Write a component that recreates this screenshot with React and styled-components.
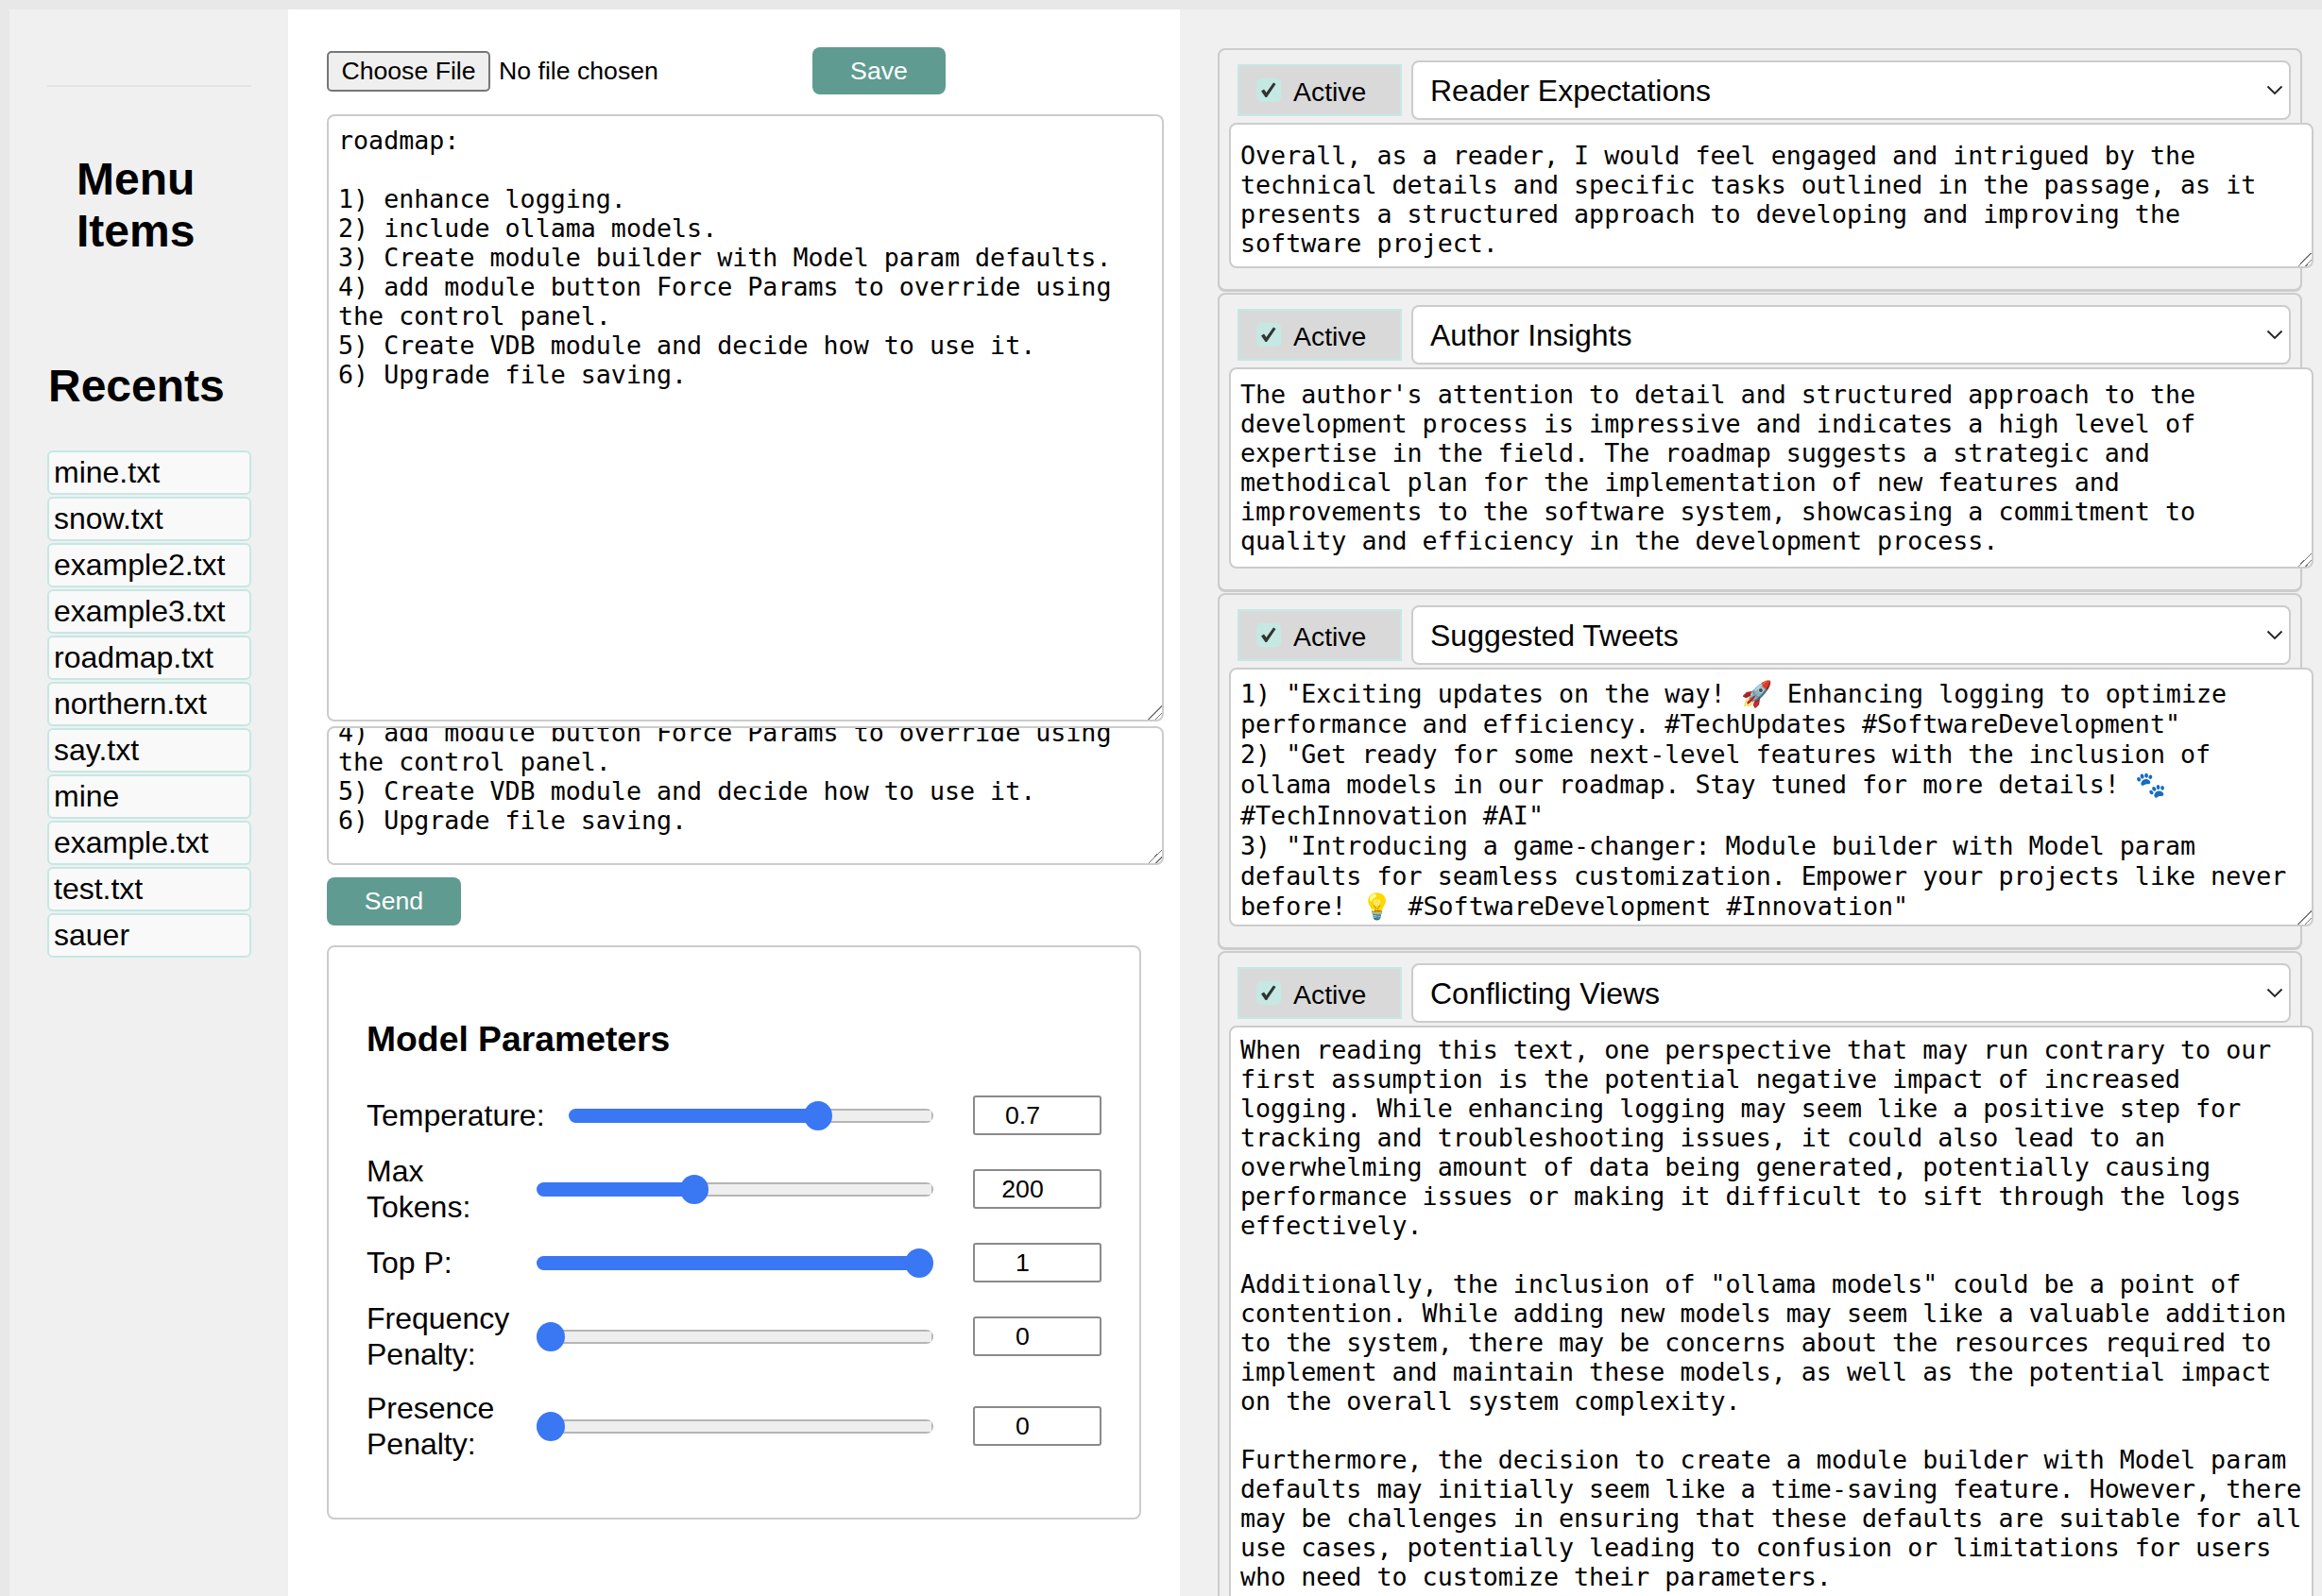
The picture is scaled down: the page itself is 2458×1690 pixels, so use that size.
import React, { useLayoutEffect, useRef } from 'react'
import styled, { createGlobalStyle } from 'styled-components'

const recents = ['mine.txt', 'snow.txt', 'example2.txt', 'example3.txt', 'roadmap.txt', 'northern.txt', 'say.txt', 'mine', 'example.txt', 'test.txt', 'sauer']

const roadmap = `roadmap:

1) enhance logging.
2) include ollama models.
3) Create module builder with Model param defaults.
4) add module button Force Params to override using the control panel.
5) Create VDB module and decide how to use it.
6) Upgrade file saving.
`

const params = [
  { label: 'Temperature:', value: 0.7, max: 1, step: 0.01 },
  { label: 'Max Tokens:', value: 200, max: 512, step: 1 },
  { label: 'Top P:', value: 1, max: 1, step: 0.01 },
  { label: 'Frequency Penalty:', value: 0, max: 2, step: 0.01 },
  { label: 'Presence Penalty:', value: 0, max: 2, step: 0.01 },
]

const panels = [
  {
    title: 'Reader Expectations',
    height: 154,
    top: 16.5,
    text: 'Overall, as a reader, I would feel engaged and intrigued by the technical details and specific tasks outlined in the passage, as it presents a structured approach to developing and improving the software project.',
  },
  {
    title: 'Author Insights',
    height: 213,
    top: 10.5,
    text: "The author's attention to detail and structured approach to the development process is impressive and indicates a high level of expertise in the field. The roadmap suggests a strategic and methodical plan for the implementation of new features and improvements to the software system, showcasing a commitment to quality and efficiency in the development process.",
  },
  {
    title: 'Suggested Tweets',
    height: 274,
    top: 10,
    lineHeight: 32.14,
    text: `1) "Exciting updates on the way! 🚀 Enhancing logging to optimize performance and efficiency. #TechUpdates #SoftwareDevelopment"
2) "Get ready for some next-level features with the inclusion of ollama models in our roadmap. Stay tuned for more details! 🐾 #TechInnovation #AI"
3) "Introducing a game-changer: Module builder with Model param defaults for seamless customization. Empower your projects like never before! 💡 #SoftwareDevelopment #Innovation"`,
  },
  {
    title: 'Conflicting Views',
    height: 640,
    top: 8,
    text: `When reading this text, one perspective that may run contrary to our first assumption is the potential negative impact of increased logging. While enhancing logging may seem like a positive step for tracking and troubleshooting issues, it could also lead to an overwhelming amount of data being generated, potentially causing performance issues or making it difficult to sift through the logs effectively.

Additionally, the inclusion of "ollama models" could be a point of contention. While adding new models may seem like a valuable addition to the system, there may be concerns about the resources required to implement and maintain these models, as well as the potential impact on the overall system complexity.

Furthermore, the decision to create a module builder with Model param defaults may initially seem like a time-saving feature. However, there may be challenges in ensuring that these defaults are suitable for all use cases, potentially leading to confusion or limitations for users who need to customize their parameters.`,
  },
]

const ParamRow = ({ param }) => (
  <Row>
    <RowLabel>{param.label}</RowLabel>
    <Slider
      type="range"
      min="0"
      max={param.max}
      step={param.step}
      defaultValue={param.value}
      $ratio={param.value / param.max}
    />
    <NumberInput type="number" defaultValue={param.value} />
  </Row>
)

const Panel = ({ panel }) => (
  <Card>
    <CardHead>
      <ActiveBox>
        <CheckWrap>
          <CheckInput type="checkbox" defaultChecked />
          <CheckMark viewBox="0 0 26 25">
            <path d="M5 13.5 L8 11.5 L10.5 15 L18 4.5 L20.5 6 L11 20 L9.5 20 Z" fill="#333" />
          </CheckMark>
        </CheckWrap>
        <ActiveText>Active</ActiveText>
      </ActiveBox>
      <SelectWrap>
        <Select defaultValue={panel.title}>
          <option>{panel.title}</option>
        </Select>
        <Chevron viewBox="0 0 18 11">
          <path d="M1.5 1.5 L9 9 L16.5 1.5" fill="none" stroke="#222" strokeWidth="1.8" />
        </Chevron>
      </SelectWrap>
    </CardHead>
    <CardText
      readOnly
      value={panel.text}
      $height={panel.height}
      $top={panel.top}
      $lineHeight={panel.lineHeight || 31}
    />
  </Card>
)

export default function App() {
  const promptRef = useRef(null)

  useLayoutEffect(() => {
    promptRef.current.scrollTop = 176
  }, [])

  return (
    <>
      <GlobalStyle />
      <Page>
        <Sidebar>
          <Rule />
          <MenuTitle>Menu Items</MenuTitle>
          <RecentsTitle>Recents</RecentsTitle>
          <RecentList>
            {recents.map((name, i) => (
              <RecentItem key={i}>{name}</RecentItem>
            ))}
          </RecentList>
        </Sidebar>

        <Center>
          <FileRow>
            <FileInput type="file" />
            <ActionButton type="button">Save</ActionButton>
          </FileRow>
          <MainText readOnly value={roadmap} />
          <PromptText ref={promptRef} readOnly value={roadmap} />
          <SendButton type="button">Send</SendButton>
          <ParamsCard>
            <ParamsTitle>Model Parameters</ParamsTitle>
            <Rows>
              {params.map((param) => (
                <ParamRow key={param.label} param={param} />
              ))}
            </Rows>
          </ParamsCard>
        </Center>

        <RightColumn>
          {panels.map((panel) => (
            <Panel key={panel.title} panel={panel} />
          ))}
        </RightColumn>
      </Page>
    </>
  )
}

const GlobalStyle = createGlobalStyle`
  html, body {
    margin: 0;
    height: 1690px;
    overflow: hidden;
    background: #e8e8e8;
    font-family: "Liberation Sans", Arial, sans-serif;
    color: #000;
  }
  * {
    box-sizing: border-box;
  }
`

const Page = styled.div`
  display: flex;
  height: 1690px;
  padding: 10px 0 0 10px;
  overflow: hidden;
`

const Sidebar = styled.aside`
  width: 295px;
  flex-shrink: 0;
  padding: 80px 39px 0 40px;
  background: #f0f0f0;
`

const Rule = styled.div`
  height: 2px;
  background: #e4e4e4;
`

const MenuTitle = styled.h1`
  margin: 70px 0 0 31px;
  font-size: 48px;
  line-height: 55px;
  font-weight: bold;
`

const RecentsTitle = styled.h2`
  margin: 109px 0 0 1px;
  font-size: 48px;
  line-height: 55px;
  font-weight: bold;
`

const RecentList = styled.ul`
  display: flex;
  flex-direction: column;
  gap: 2px;
  margin: 41px 0 0;
  padding: 0;
  list-style: none;
`

const RecentItem = styled.li`
  height: 47px;
  padding-left: 5px;
  background: #f9f9f9;
  border: 2px solid #c5e8e3;
  border-radius: 6px;
  font-size: 32px;
  line-height: 43px;
`

const Center = styled.main`
  width: 944px;
  flex-shrink: 0;
  padding: 40px 17px 0 41px;
  background: #fff;
`

const FileRow = styled.div`
  display: flex;
  align-items: center;
  height: 50px;
`

const FileInput = styled.input`
  width: 514px;
  font-family: "Liberation Sans", Arial, sans-serif;
  font-size: 26.67px;
  color: #000;

  &::file-selector-button {
    height: 43px;
    width: 173px;
    margin-right: 9px;
    padding: 0;
    background: #efefef;
    border: 2px solid #767676;
    border-radius: 5px;
    font-family: "Liberation Sans", Arial, sans-serif;
    font-size: 26.67px;
    color: #000;
  }
`

const ActionButton = styled.button`
  width: 141px;
  height: 50px;
  padding: 0;
  background: #5f9b91;
  border: none;
  border-radius: 8px;
  font-family: "Liberation Sans", Arial, sans-serif;
  font-size: 26.67px;
  color: #fff;
`

const SendButton = styled(ActionButton)`
  display: block;
  width: 142px;
  height: 51px;
  margin-top: 13px;
`

const monoText = `
  display: block;
  background: #fff;
  border: 2px solid #ccc;
  border-radius: 8px;
  font-family: "DejaVu Sans Mono", monospace;
  font-size: 26.67px;
  line-height: 31px;
  color: #000;
  overflow: hidden;
  outline: none;

  &::-webkit-resizer {
    background: linear-gradient(
      135deg,
      transparent 50%,
      #777 50%,
      #777 56%,
      transparent 56%,
      transparent 74%,
      #777 74%,
      #777 80%,
      transparent 80%
    );
  }
`

const MainText = styled.textarea`
  ${monoText}
  width: 886px;
  height: 643px;
  margin-top: 21px;
  padding: 10px;
`

const PromptText = styled.textarea`
  ${monoText}
  width: 886px;
  height: 147px;
  margin-top: 5px;
  padding: 10px;
`

const ParamsCard = styled.section`
  width: 862px;
  height: 608px;
  margin-top: 21px;
  padding: 76px 40px 0;
  background: #fff;
  border: 2px solid #ccc;
  border-radius: 8px;
`

const ParamsTitle = styled.h2`
  margin: 0 0 38px;
  font-size: 37.3px;
  line-height: 43px;
  font-weight: bold;
`

const Rows = styled.div`
  display: flex;
  flex-direction: column;
  gap: 19px;
`

const Row = styled.div`
  display: flex;
  align-items: center;
  gap: 25px;
`

const RowLabel = styled.label`
  width: 155px;
  min-width: min-content;
  flex-shrink: 0;
  font-size: 32px;
  line-height: 38px;
`

const Slider = styled.input`
  flex: 1;
  min-width: 0;
  height: 32px;
  margin: 0;
  background: transparent;
  appearance: none;
  -webkit-appearance: none;

  &::-webkit-slider-runnable-track {
    height: 15px;
    border-radius: 8px;
    background:
      linear-gradient(
        to right,
        #3a77f2 calc(15px + (100% - 30px) * ${(props) => props.$ratio}),
        transparent calc(15px + (100% - 30px) * ${(props) => props.$ratio})
      ),
      linear-gradient(to left, #b5b5b5 2px, transparent 2px),
      linear-gradient(to bottom, #b5b5b5 2px, #eee 2px, #eee 13px, #b5b5b5 13px);
  }

  &::-webkit-slider-thumb {
    -webkit-appearance: none;
    width: 30px;
    height: 31px;
    margin-top: -8px;
    background: #3a77f2;
    border-radius: 50%;
  }
`

const NumberInput = styled.input`
  width: 136px;
  height: 42px;
  flex-shrink: 0;
  margin-left: 17px;
  padding: 0 31px 0 0;
  background: #fff;
  border: 2px solid #8a8a8a;
  border-radius: 3px;
  font-family: "Liberation Sans", Arial, sans-serif;
  font-size: 26.67px;
  text-align: center;
  color: #000;
  appearance: textfield;
  -moz-appearance: textfield;

  &::-webkit-inner-spin-button,
  &::-webkit-outer-spin-button {
    -webkit-appearance: none;
    margin: 0;
  }
`

const RightColumn = styled.div`
  flex: 1;
  min-width: 0;
  display: flex;
  flex-direction: column;
  padding: 41px 21px 0 40px;
  background: #f0f0f0;
  overflow: hidden;
`

const Card = styled.section`
  flex-shrink: 0;
  margin-bottom: 2px;
  padding: 11px 10px 22px;
  background: #f0f0f0;
  border: 2px solid #ccc;
  border-radius: 8px;
  box-shadow: 0 1px 0 #ccc;
`

const CardHead = styled.div`
  display: flex;
  align-items: center;
  gap: 10px;
  padding-left: 9px;
`

const ActiveBox = styled.label`
  display: flex;
  align-items: center;
  gap: 13px;
  width: 174px;
  height: 55px;
  flex-shrink: 0;
  padding: 0 0 0 18px;
  background: #d9d9d9;
  border: 2px solid #c5e8e3;
  font-size: 28.4px;
`

const ActiveText = styled.span`
  padding-top: 3px;
`

const CheckWrap = styled.span`
  position: relative;
  display: block;
  width: 26px;
  height: 25px;
`

const CheckInput = styled.input`
  display: block;
  width: 26px;
  height: 25px;
  margin: 0;
  background: #c5e8e3;
  border-radius: 5px;
  appearance: none;
  -webkit-appearance: none;
`

const CheckMark = styled.svg`
  position: absolute;
  top: 0;
  left: 0;
  width: 26px;
  height: 25px;
`

const SelectWrap = styled.div`
  position: relative;
  flex: 1;
  min-width: 0;
`

const Select = styled.select`
  display: block;
  width: 100%;
  height: 63px;
  padding: 0 0 0 18px;
  background: #fff;
  border: 2px solid #ccc;
  border-radius: 8px;
  font-family: "Liberation Sans", Arial, sans-serif;
  font-size: 32px;
  color: #000;
  outline: none;
  appearance: none;
  -webkit-appearance: none;
`

const Chevron = styled.svg`
  position: absolute;
  top: 26px;
  right: 8px;
  width: 18px;
  height: 11px;
`

const CardText = styled.textarea`
  ${monoText}
  width: 1148px;
  height: ${(props) => props.$height}px;
  margin-top: 3px;
  padding: ${(props) => props.$top}px 10px 0;
  line-height: ${(props) => props.$lineHeight}px;
`
